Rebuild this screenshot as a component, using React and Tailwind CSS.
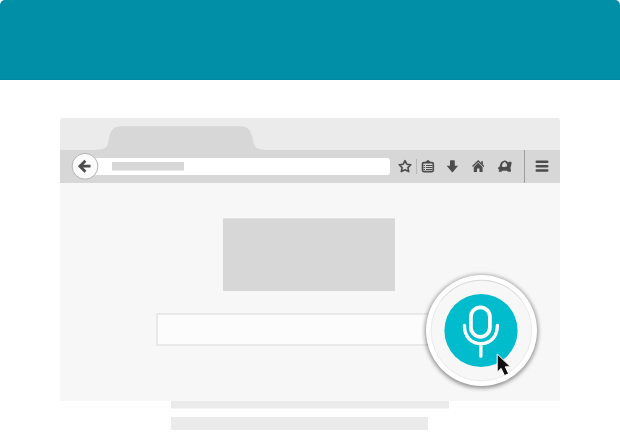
function BackButton() {
  return (
    <svg className="relative z-10 -mr-[1px] block h-7 w-7 shrink-0" viewBox="0 0 28 28" fill="none">
      <circle cx="14" cy="14.3" r="12.9" fill="#fbfbfb" stroke="#b4b4b4" strokeWidth="1" />
      <path d="M19.5 14.2H10M14.4 8.7L8.900 14.200l5.500 5.500" stroke="#4c4c4c" strokeWidth="2.8" />
    </svg>
  );
}

function StarIcon() {
  return (
    <svg className="h-[14px] w-[14px]" viewBox="0 0 14 14" fill="none">
      <path d="M7 1.600l1.800 3.600 4 .5-2.900 2.900.8 4L7 10.700l-3.700 1.900.8-4L1.200 5.700l4-.5z" stroke="#4c4c4c" strokeWidth="1.600" strokeLinejoin="round" />
    </svg>
  );
}

function ListIcon() {
  return (
    <svg className="h-[14px] w-[14px]" viewBox="0 0 14 14" fill="none" stroke="#4c4c4c">
      <rect x="1.500" y="3.600" width="10.800" height="9" rx="1.300" strokeWidth="1.600" />
      <path d="M4.800 3.400L6.200 1.500h1.600l1.400 1.900z" fill="#4c4c4c" strokeWidth=".6" />
      <path d="M2.500 6.500H4M2.500 8.500H4M2.500 10.500H4M5 6.500h6.500M5 8.500h6.500M5 10.500h6.500" strokeWidth="1" />
    </svg>
  );
}

function DownloadIcon() {
  return (
    <svg className="h-[14px] w-[14px]" viewBox="0 0 14 14">
      <path d="M4 1.900q0-.7.7-.7h3.400q.7 0 .7.700v4.800h3.300L6.900 13.100q-.5.400-1 0L.7 6.700H4z" fill="#4c4c4c" />
    </svg>
  );
}

function HomeIcon() {
  return (
    <svg className="h-[14px] w-[14px]" viewBox="0 0 14 14" fill="none">
      <path d="M.5 7.500L6.200 2l5.700 5.500" stroke="#4c4c4c" strokeWidth="1.400" />
      <path d="M1.800 8.200l4.400-4.500 4.400 4.500V13H7.500V9.500H5V13H1.800zM9.200 2.200h1.700v3.300L9.200 3.900z" fill="#4c4c4c" />
    </svg>
  );
}

function TurtleIcon() {
  return (
    <svg className="h-[14px] w-[14px]" viewBox="0 0 14 14">
      <path d="M0 9.500Q0 8 1.700 7.500 2.400 2.200 6.400 1.500q2.500-.1 3.700 2l.8-.7h2.100q.7.300.5 1.700-.3 2.600-1.100 4.200l.7 3.100-.4 1H10l-.9-1.100H4.300l-.7 1.100H.9l-.2-.9.7-1.300Q.1 10.300 0 9.500z" fill="#4c4c4c" />
      <path d="M3.900 6.900Q4.200 3.900 6.300 3q2 .1 2.800 3.400.1.800-.5 1.200-2.300.7-4.300.100z" fill="#d7d7d7" />
    </svg>
  );
}

function MenuIcon() {
  return (
    <svg className="h-[14px] w-[14px]" viewBox="0 0 14 14" stroke="#4c4c4c" strokeWidth="2.600" strokeLinecap="round">
      <path d="M1.800 2.700h10.400M1.800 7.200h10.400M1.800 11.500h10.400" />
    </svg>
  );
}

function MicButton() {
  return (
    <div className="absolute left-[366px] top-[157px] h-[111px] w-[111px] rounded-full bg-white shadow-[0_1px_4px_1px_rgba(0,0,0,0.45)]">
      <svg className="block h-[111px] w-[111px] overflow-visible" viewBox="426 275 111 111" fill="none">
        <circle cx="481.4" cy="330.5" r="50.3" fill="#f7f7f7" stroke="#e3e3e3" strokeWidth=".7" />
        <path d="M441 300.500a50.300 50.300 0 0 1 80.800 0" stroke="#cfcfcf" strokeWidth=".6" />
        <circle cx="481" cy="330.5" r="36.6" fill="#00bccd" />
        <g stroke="#fff" strokeLinecap="round">
          <rect x="470.9" y="307.4" width="19" height="29.4" rx="9.5" strokeWidth="3.8" />
          <path d="M464.4 325.3c0 11.200 6.500 18.400 16.400 18.400s16.600-7.200 16.600-18.400M480.900 343.700v12.500" strokeWidth="3.3" />
        </g>
        <path d="M497.200 354v18.200l3.900-3.800 3.400 7.200 4.100-1.900-3.300-6.900h5.200z" fill="#111" stroke="#fff" strokeWidth="1" />
      </svg>
    </div>
  );
}

export default function App() {
  return (
    <div className="flex h-[436px] w-[620px] flex-col items-center overflow-hidden bg-white">
      <header className="h-20 w-full shrink-0 rounded-t-[5px] border-b border-[#0089a1] bg-[#008fa7]" />
      <main className="relative mt-[38px] flex h-[283px] w-[500px] shrink-0 flex-col rounded-t-[3px] bg-[#f7f7f7]">
        <div className="h-8 shrink-0 rounded-t-[3px] bg-[#ebebeb] pl-[36px]">
          <svg className="block h-8 w-[168px]" viewBox="96 118 168 32">
            <path d="M96 149.700c9.500 0 11.500-2.700 12.500-8.700 1.500-10 4-14.700 12.500-14.700h119c8.500 0 11 4.200 13 13.700 1.500 7 3 9.700 11 9.700v.3H96z" fill="#d7d7d7" />
          </svg>
        </div>
        <nav className="flex h-[33px] shrink-0 items-center bg-[#d7d7d7] pb-px pl-[11px]">
          <BackButton />
          <div className="-ml-[3px] flex h-[17px] w-[295px] items-center rounded-r-[3px] bg-white pl-[17px]">
            <div className="h-[9px] w-[72px] border-b border-[#ebebeb] bg-[#d7d7d7]" />
          </div>
          <div className="ml-2 flex items-center">
            <StarIcon />
            <div className="mx-1 h-[15px] w-px bg-[#b9b9b9]" />
            <ListIcon />
          </div>
          <div className="ml-[11px] flex gap-3">
            <DownloadIcon />
            <HomeIcon />
            <TurtleIcon />
          </div>
          <div className="-mb-px ml-3 w-px self-stretch bg-[#9d9d9d]" />
          <div className="flex flex-1 justify-center pr-px">
            <MenuIcon />
          </div>
        </nav>
        <div className="ml-[163px] mt-[35px] h-[73px] w-[172px] border-t border-[#e0e0e0] bg-[#d7d7d7]" />
        <div className="ml-24 mt-[22px] h-[33px] w-[300px] border-2 border-[#e9e9e9] bg-[#fcfcfc]" />
        <MicButton />
      </main>
      <div className="ml-[171px] flex w-[278px] shrink-0 flex-col gap-2 self-start">
        <div className="h-2 w-[278px] border-b border-[#f5f5f5] bg-[#ebebeb]" />
        <div className="h-[13px] w-[257px] bg-[#ebebeb]" />
      </div>
    </div>
  );
}
